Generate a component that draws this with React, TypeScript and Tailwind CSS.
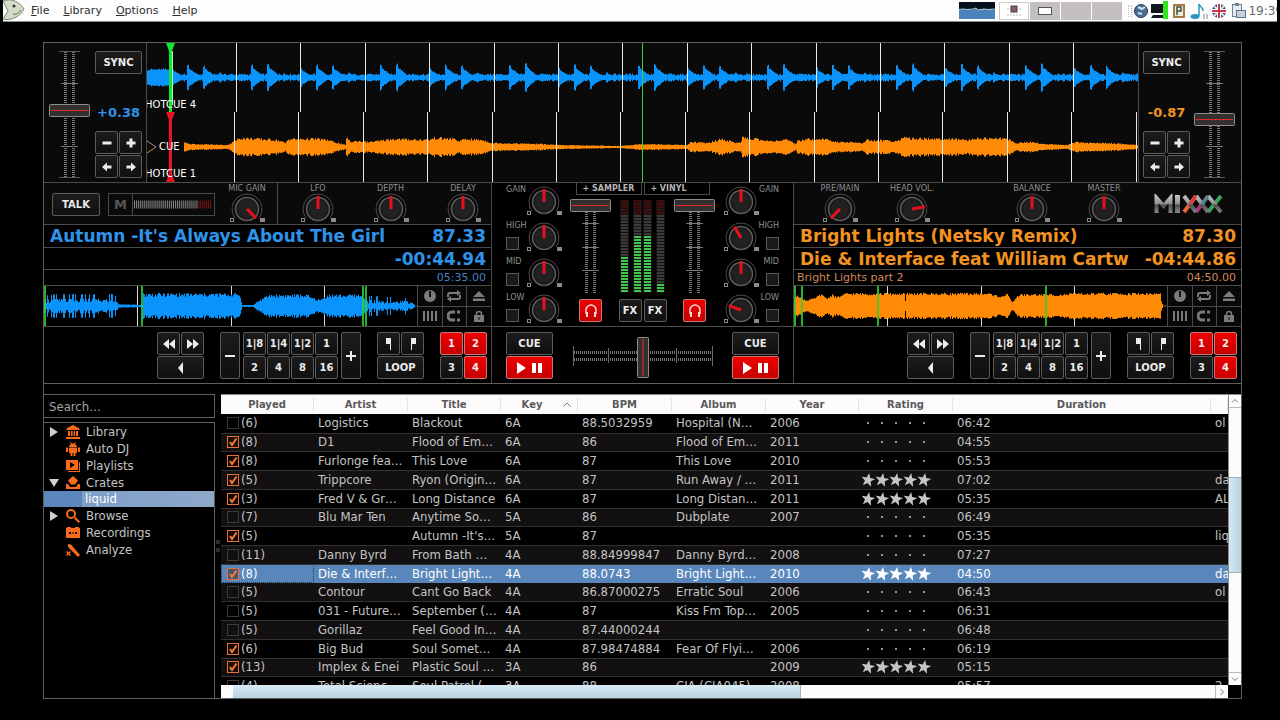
import { useState } from 'react';
import type { ReactNode } from 'react';
import clsx from 'clsx';

type Side = 'left' | 'right';

const sans = "font-['DejaVu_Sans',sans-serif]";
const condensed = "font-['DejaVu_Sans_Condensed','DejaVu_Sans',sans-serif]";

/* ---------- waveforms ---------- */

// deterministic noise, so a track always looks the same
const noise = (i: number, seed: number) => {
  const v = Math.sin(i * 12.9898 + seed * 78.233) * 43758.5453;
  return v - Math.floor(v);
};

const wavePath = (width: number, mid: number, amp: (x: number) => number) => {
  let d = '';
  for (let x = 0; x < width; x++) {
    const a = amp(x);
    if (a <= 0) continue;
    const up = Math.round((mid - a) * 10) / 10;
    const h = Math.round(a * 20) / 10;
    d += `M${x} ${up}h1v${h}h-1z`;
  }
  return d;
};

const envelope = (points: number[][], x: number) => {
  for (let i = 1; i < points.length; i++) {
    const [x0, y0] = points[i - 1];
    const [x1, y1] = points[i];
    if (x >= x0 && x <= x1) return x1 === x0 ? y1 : y0 + ((y1 - y0) * (x - x0)) / (x1 - x0);
  }
  return 0;
};

const kicks = [
  [0, 10], [16, 13], [32, 12], [48, 5], [80, 13], [96, 14], [112, 4],
];

const drumAmp = (x: number) => {
  let a = 2 + noise(x, 1) * 2;
  if (x < 24) a = 7 + noise(x, 2) * 2;
  const pos = (x - 24 + 129) % 129;
  for (const [start, height] of kicks) {
    const dist = pos - start;
    if (dist >= 0 && dist < 14) {
      const fade = dist < 2 ? 1 : 0.85 * (1 - dist / 14);
      a = Math.max(a, height * fade * (0.88 + noise(x, 3) * 0.15));
    }
  }
  return a;
};

const padPoints = [
  [36, 0], [37, 5], [42, 3], [80, 2], [88, 6], [92, 9], [110, 8], [130, 7], [138, 4], [141, 8], [170, 8],
  [180, 7], [194, 3], [198, 2], [199, 10], [203, 5], [210, 6], [220, 5], [232, 6], [245, 8], [282, 7],
  [287, 9], [308, 8], [312, 5], [316, 8], [335, 7], [345, 4], [393, 3], [410, 2], [473, 1], [495, 3],
  [540, 2], [543, 5], [560, 4], [575, 8], [585, 5], [593, 4], [595, 9], [610, 8], [618, 6], [640, 7],
  [648, 3], [650, 6], [660, 8], [680, 8], [685, 5], [700, 5], [715, 4], [720, 7], [748, 6], [755, 9],
  [796, 8], [820, 7], [835, 9], [862, 8], [868, 4], [885, 5], [895, 3], [920, 2], [928, 5], [940, 4],
  [960, 4], [991, 2],
];

const padAmp = (x: number) => envelope(padPoints, x) * (0.8 + noise(x, 4) * 0.35);

const blueOverview = [
  [0, 8], [10, 9], [25, 9], [70, 9], [75, 2], [95, 1], [98, 2], [99, 12], [195, 12], [198, 1],
  [209, 1], [212, 4], [225, 11], [262, 11], [268, 8], [276, 6], [283, 11], [316, 11], [320, 8], [367, 6], [370, 1],
];

const blueOverviewAmp = (x: number) => {
  const env = envelope(blueOverview, x);
  const spiky = x < 75 || x > 320;
  if (spiky) return env * (noise(x, 5) > 0.8 ? 1.3 : 0.35 + noise(x, 6) * 0.5);
  return env * (0.75 + noise(x, 7) * 0.35);
};

const orangeOverview = [
  [0, 8], [3, 12], [7, 8], [12, 6], [20, 8], [26, 12], [33, 8], [38, 12], [42, 9], [52, 13], [110, 13],
  [111, 5], [112, 13], [195, 13], [205, 10], [213, 12], [218, 4], [221, 8], [225, 12], [270, 12], [278, 13],
  [366, 13], [367, 5], [369, 0],
];

const orangeOverviewAmp = (x: number) => envelope(orangeOverview, x) * (0.82 + noise(x, 8) * 0.2);

const bars = Array.from({ length: 14 }, (_, i) => Math.round(90 + i * 64.4));

const Scope = () => (
  <div className="relative min-w-0 flex-1 overflow-hidden bg-[#0b0a0a]">
    <svg viewBox="0 0 991 139" preserveAspectRatio="none" className="block h-full w-full">
      <path d={wavePath(991, 34.5, drumAmp)} fill="#0a93fa" />
      <path d={wavePath(991, 104, padAmp)} fill="#ff8a06" />
      {bars.map((x) => (
        <g key={x} fill="#e8e8e8">
          <rect x={x - 1} y="0" width="1" height="69" />
          <rect x={x - 3} y="69" width="1" height="70" />
        </g>
      ))}
      <rect x="989" y="69" width="1" height="70" fill="#e8e8e8" />
      <rect x="495" y="0" width="1" height="139" fill="#3bd13b" />
      <path d="M19 0h9l-3 8v61h-3V8z" fill="#12e52e" />
      <rect x="25" y="8" width="1" height="54" fill="#b9f7bd" />
      <path d="M19 69h9l-3 8v54l3 8h-9l3-8V77z" fill="#e81224" />
      <path d="M0 98l9 6-9 6" fill="none" stroke="#c98a5c" />
    </svg>
    <div className={clsx(sans, 'pointer-events-none absolute inset-0 text-[10px] leading-3 text-white')}>
      <span className="absolute top-14 -left-0.5">HOTCUE 4</span>
      <span className="absolute top-[98px] left-3">CUE</span>
      <span className="absolute top-[125px] -left-0.5">HOTCUE 1</span>
    </div>
  </div>
);

const Overview = ({ side }: { side: Side }) => {
  const left = side === 'left';
  const cues = left ? [0, 97, 318, 321] : [0, 7, 83, 251];
  const minutes = [93, 187, 280];
  return (
    <svg viewBox="0 0 373 40" preserveAspectRatio="none" className="block h-10 min-w-0 flex-1">
      <rect y="19.5" width="373" height="1" fill={left ? '#35608f' : '#80603a'} />
      {minutes.map((x) => <rect key={x} x={x} width="1" height="40" fill="#d8d8d8" />)}
      <path
        d={left ? wavePath(373, 20, blueOverviewAmp) : wavePath(373, 20, orangeOverviewAmp)}
        fill={left ? '#0a93fa' : '#ff8a06'}
      />
      {cues.map((x) => <rect key={x} x={x} width="2" height="40" fill="#2fd03a" opacity="0.85" />)}
    </svg>
  );
};

/* ---------- basic controls ---------- */

const SkinButton = ({ children, label, red, className }: {
  children: ReactNode; label?: string; red?: boolean; className?: string;
}) => (
  <button
    type="button"
    aria-label={label}
    className={clsx(
      sans,
      'flex items-center justify-center rounded-[2px] border bg-linear-to-b text-[10px] leading-3 font-bold text-[#ececec]',
      red ? 'border-[#c77a7a] from-[#f00000] to-[#c40000]' : 'border-[#5b5b5b] from-[#1d1b1b] to-[#101010] hover:to-[#2b2b2b]',
      className ?? 'size-[23px]',
    )}
  >
    {children}
  </button>
);

const Icon = ({ d, className = 'size-3' }: { d: string; className?: string }) => (
  <svg viewBox="0 0 12 12" className={className} fill="currentColor"><path d={d} /></svg>
);

const icons = {
  minus: 'M1.500 4.500h9v3h-9z',
  plus: 'M4.500 1.500h3v3h3v3h-3v3h-3v-3h-3v-3h3z',
  thinMinus: 'M1 5h10v2H1z',
  thinPlus: 'M5 1h2v4h4v2H7v4H5V7H1V5h4z',
  arrowLeft: 'M1 6l5-4.500v3h4.500v3H6v3z',
  arrowRight: 'M11 6L6 1.500v3H1.500v3H6v3z',
  rewind: 'M0 6l6-5v10zM6 6l6-5v10z',
  forward: 'M12 6L6 1v10zM6 6L0 1v10z',
  reverse: 'M3 6l5-6v12z',
  flagIn: 'M3 0h5v12H7V6H3z',
  flagOut: 'M9 0H4v12h1V6h4z',
};

const Knob = ({ label, angle = 0 }: { label: string; angle?: number }) => (
  <div className="grid shrink-0 *:col-start-1 *:row-start-1">
    <svg viewBox="0 0 36 30" className="h-[30px] w-9" fill="none">
      <path d="M6 25a15 15 0 1 1 24 0" stroke="#4c4c4c" />
      <circle cx="18" cy="16" r="11.500" fill="#1c1b1b" stroke="#5c5c5c" strokeWidth="1.500" />
      <circle cx="18" cy="16" r="9" fill="#222121" />
      <path d="M18 16V3" stroke="#e8101c" strokeWidth="3" transform={`rotate(${angle} 18 16)`} />
      <rect x="1.500" y="25.500" width="3" height="3" stroke="#8a8a8a" />
      <rect x="31" y="25" width="5" height="4" fill="#8a8a8a" />
    </svg>
    <input type="range" aria-label={label} className="h-[30px] w-9 opacity-0" />
  </div>
);

const LabelledKnob = ({ label, angle }: { label: string; angle?: number }) => (
  <label className="flex w-12 flex-col items-center pt-0.5">
    <span className={clsx(sans, 'text-[8px] leading-2 whitespace-nowrap text-[#8f8f8f]')}>{label}</span>
    <Knob label={label} angle={angle} />
  </label>
);

const Ruler = ({ length }: { length: number }) => (
  <g stroke="#777" strokeWidth="3">
    <path d={`M16.500 1V${length}M24.500 1V${length}`} strokeDasharray="1 1" />
  </g>
);

const Fader = ({ label, length, at, ends }: { label: string; length: number; at: number; ends?: boolean }) => (
  <div className="grid *:col-start-1 *:row-start-1">
    <svg width="41" height={length} fill="none">
      <Ruler length={length} />
      {ends && <path d={`M10 .5h21M10 ${length - 0.5}h21`} stroke="#5a5a5a" />}
      {[0.25, 0.5, 0.75].map((t) => (
        (!ends || t !== 0.5) && <path key={t} d={`M12 ${Math.round(length * t) + 0.5}h17`} stroke="#777" />
      ))}
      <rect x=".5" y={at + 0.5} width="40" height="12" rx="1" fill="#343030" stroke="#8c8c8c" />
      <path d={`M2 ${at + 6.5}h37`} stroke="#e02a2a" />
    </svg>
    <input type="range" aria-label={label} className="h-full w-[41px] opacity-0" />
  </div>
);

const VuMeter = ({ level }: { level: number }) => (
  <svg width="9" height="93">
    <rect width="9" height="93" fill="#141414" />
    {Array.from({ length: 31 }, (_, i) => {
      const y = i * 3;
      let fill = '#3c3a3a';
      if (i < 5) fill = '#420c0c';
      if (y >= 93 - level) fill = '#3fc84a';
      return <rect key={i} x="1" y={y} width="7" height="2" fill={fill} />;
    })}
  </svg>
);

/* ---------- top row ---------- */

const RatePanel = ({ side, rate }: { side: Side; rate: string }) => (
  <div
    className={clsx(
      'flex w-[103px] shrink-0 justify-between border-[#4a4a4a] bg-[#0b0a0a] pt-2 pb-1',
      side === 'left' ? 'border-r pr-1 pl-[5px]' : 'flex-row-reverse border-l pr-1.5 pl-1',
    )}
  >
    <Fader label={`${side} rate`} length={127} at={side === 'left' ? 53 : 62} ends />
    <div className="flex w-[47px] flex-col items-center">
      <SkinButton className="h-[23px] w-full">SYNC</SkinButton>
      <span
        className={clsx(sans, 'mt-auto mb-2.5 text-[13px] leading-4 font-bold', side === 'left' ? 'text-[#2f93ea]' : 'text-[#f29222]')}
      >
        {rate}
      </span>
      <div className="grid grid-cols-2 gap-px">
        <SkinButton label="Rate down"><Icon d={icons.minus} /></SkinButton>
        <SkinButton label="Rate up"><Icon d={icons.plus} /></SkinButton>
        <SkinButton label="Nudge back"><Icon d={icons.arrowLeft} /></SkinButton>
        <SkinButton label="Nudge forward"><Icon d={icons.arrowRight} /></SkinButton>
      </div>
    </div>
  </div>
);

/* ---------- decks ---------- */

const MicRow = () => (
  <div className="flex h-[42px] border-b border-[#4a4a4a] bg-[#0b0a0a]">
    <div className="flex w-[234px] shrink-0 items-start border-r border-[#4a4a4a] pl-2">
      <SkinButton className="mt-2.5 h-[23px] w-12">TALK</SkinButton>
      <div className="mt-2.5 ml-2 flex h-[23px] w-[107px] border border-[#4a4a4a]">
        <span className={clsx(sans, 'flex w-6 items-center justify-center border-r border-[#4a4a4a] text-[13px] font-bold text-[#555]')}>M</span>
        <svg viewBox="0 0 82 9" className="m-auto h-[9px] w-[80px]">
          <path d="M0 4.500h66" stroke="#8a8a8a" strokeWidth="8" strokeDasharray="1 1" />
          <path d="M66 4.500h14" stroke="#7c1414" strokeWidth="8" strokeDasharray="1 1" />
        </svg>
      </div>
      <div className="ml-2"><LabelledKnob label="MIC GAIN" angle={135} /></div>
    </div>
    <div className="flex flex-1 justify-between pr-1 pl-4">
      <LabelledKnob label="LFO" />
      <LabelledKnob label="DEPTH" />
      <LabelledKnob label="DELAY" />
    </div>
  </div>
);

const Logo = () => (
  <svg viewBox="0 0 72 20" className="mt-[11px] mr-4 ml-auto h-5 w-[72px]" role="img" aria-label="Mixxx">
    <defs>
      <linearGradient id="steel" gradientUnits="userSpaceOnUse" x1="0" y1="1" x2="0" y2="19">
        <stop offset="0" stopColor="#c9c9c9" />
        <stop offset="0.5" stopColor="#8d8d8d" />
        <stop offset="0.55" stopColor="#4c4c4c" />
        <stop offset="1" stopColor="#8a8a8a" />
      </linearGradient>
    </defs>
    <path d="M3.500 19V4l7 8 7-8v15" fill="none" stroke="url(#steel)" strokeWidth="4" />
    <path d="M22 1h5v18h-5z" fill="url(#steel)" />
    <g fill="none" strokeWidth="4">
      <path d="M31 18L43 2" stroke="#e0643c" />
      <path d="M43 18L55 2" stroke="#a8357c" />
      <path d="M55 18L68 2" stroke="#3aa45e" />
      <path d="M31 2l12 16" stroke="url(#steel)" />
      <path d="M43 2l12 16" stroke="url(#steel)" />
      <path d="M55 2l13 16" stroke="url(#steel)" />
    </g>
    <path d="M37 10l6-8" stroke="#d83a3a" strokeWidth="3" />
    <path d="M49 10l6-8" stroke="#3f8f8a" strokeWidth="3" />
  </svg>
);

const MasterRow = () => (
  <div className="flex h-[42px] gap-6 border-b border-[#4a4a4a] bg-[#0b0a0a] pl-[22px]">
    <LabelledKnob label="PRE/MAIN" angle={-135} />
    <LabelledKnob label="HEAD VOL." angle={80} />
    <div className="w-6" />
    <LabelledKnob label="BALANCE" />
    <LabelledKnob label="MASTER" />
    <Logo />
  </div>
);

const DeckToggles = () => (
  <div className="grid h-10 w-[74px] shrink-0 grid-cols-3 grid-rows-2 gap-px border-l border-[#4a4a4a] bg-[#4a4a4a] text-[#7b7b7b] *:flex *:items-center *:justify-center *:bg-[#090808]">
    <button type="button" aria-label="Quantize">
      <svg viewBox="0 0 14 14" className="size-3.5">
        <circle cx="7" cy="7" r="6" fill="currentColor" /><path d="M6 2h2v6H6z" fill="#111" />
      </svg>
    </button>
    <button type="button" aria-label="Repeat">
      <svg viewBox="0 0 16 12" className="h-3 w-4" fill="none" stroke="currentColor" strokeWidth="2">
        <path d="M2 7V5q0-2 2-2h8M14 5v2q0 2-2 2H5" /><path d="M11 0v6l4-3zM5 6v6L1 9z" fill="currentColor" stroke="none" />
      </svg>
    </button>
    <button type="button" aria-label="Eject"><Icon d="M6 1l6 6H0zM0 8.500h12V11H0z" /></button>
    <button type="button" aria-label="Beat grid">
      <svg viewBox="0 0 14 12" className="h-3 w-3.5" stroke="currentColor" strokeWidth="2">
        <path d="M1 1v10M5 1v10M9 1v10M13 1v10" />
      </svg>
    </button>
    <button type="button" aria-label="Key lock">
      <svg viewBox="0 0 14 12" className="h-3 w-3.5" fill="none" stroke="currentColor" strokeWidth="3">
        <path d="M8 2H5a4 4 0 0 0 0 8h3" /><path d="M10 2h3M10 10h3" />
      </svg>
    </button>
    <button type="button" aria-label="Lock">
      <svg viewBox="0 0 12 12" className="size-3">
        <path d="M3.500 6V4a2.500 2.500 0 0 1 5 0v2" fill="none" stroke="currentColor" strokeWidth="1.500" />
        <path d="M1 5h10v7H1z" fill="currentColor" /><path d="M5.500 7h1v3h-1z" fill="#111" />
      </svg>
    </button>
  </div>
);

const beats = ['1|8', '1|4', '1|2', '1', '2', '4', '8', '16'];

const Transport = () => {
  const [hotcues, setHotcues] = useState([true, true, false, true]);
  return (
    <div className="flex h-14 items-start justify-end pt-[5px] pr-1">
      <div className="grid grid-cols-2 gap-px">
        <SkinButton label="Rewind"><Icon d={icons.rewind} /></SkinButton>
        <SkinButton label="Fast forward"><Icon d={icons.forward} /></SkinButton>
        <SkinButton label="Reverse" className="col-span-2 h-[23px]"><Icon d={icons.reverse} /></SkinButton>
      </div>
      <div className="ml-4 flex gap-[3px]">
        <SkinButton label="Shorter loop" className="h-[47px] w-5"><Icon d={icons.thinMinus} /></SkinButton>
        <div className="grid grid-cols-4 gap-px">
          {beats.map((beat) => <SkinButton key={beat}>{beat}</SkinButton>)}
        </div>
        <SkinButton label="Longer loop" className="h-[47px] w-5"><Icon d={icons.thinPlus} /></SkinButton>
      </div>
      <div className="ml-4 grid grid-cols-2 gap-px">
        <SkinButton label="Loop in"><Icon d={icons.flagIn} /></SkinButton>
        <SkinButton label="Loop out"><Icon d={icons.flagOut} /></SkinButton>
        <SkinButton className="col-span-2 h-[23px]">LOOP</SkinButton>
      </div>
      <div
        className="ml-4 grid grid-cols-2 gap-px"
        onClick={(e) => {
          const n = Number((e.target as HTMLElement).textContent) - 1;
          if (n >= 0 && n < 4) setHotcues(hotcues.map((on, i) => (i === n ? !on : on)));
        }}
      >
        {hotcues.map((on, i) => <SkinButton key={i} red={on}>{i + 1}</SkinButton>)}
      </div>
    </div>
  );
};

const Deck = ({ side, title, artist, album, bpm, remaining, total }: {
  side: Side; title: string; artist: string; album: string; bpm: string; remaining: string; total: string;
}) => {
  const big = 'flex items-center justify-between gap-4 border-b border-[#4a4a4a] pr-[5px] pl-1.5 text-[17px] leading-5 font-bold';
  return (
    <section className={clsx(sans, 'min-w-0', side === 'left' ? 'text-[#2f93ea]' : 'text-[#f29222]')}>
      {side === 'left' ? <MicRow /> : <MasterRow />}
      <div className={clsx(big, 'h-[23px]')}>
        <span className="overflow-hidden whitespace-nowrap">{title}</span>
        <span>{bpm}</span>
      </div>
      <div className={clsx(big, 'h-[22px]')}>
        <span className="overflow-hidden whitespace-nowrap">{artist}</span>
        <span>{remaining}</span>
      </div>
      <div
        className={clsx(
          'flex h-4 items-center justify-between border-b border-[#4a4a4a] pr-[5px] pl-[3px] text-[11px] leading-3',
          side === 'left' ? 'text-[#4a80c4]' : 'text-[#d08a5c]',
        )}
      >
        <span>{album}</span>
        <span>{total}</span>
      </div>
      <div className="flex border-b border-[#4a4a4a]">
        <Overview side={side} />
        <DeckToggles />
      </div>
      <Transport />
    </section>
  );
};

/* ---------- mixer ---------- */

const EqColumn = ({ side, angles }: { side: Side; angles: number[] }) => (
  <div>
    {['GAIN', 'HIGH', 'MID', 'LOW'].map((band, i) => (
      <div key={band} className={clsx('flex h-9', side === 'right' && 'flex-row-reverse')}>
        <label
          className={clsx(sans, 'flex w-5 flex-col gap-[7px] pt-[3px] text-[8px] leading-2 text-[#8f8f8f]', side === 'right' && 'items-end')}
        >
          {band}
          {i > 0 && (
            <input
              type="checkbox"
              className="size-[13px] shrink-0 appearance-none border border-[#5b5b5b] bg-[#1a1919] checked:bg-[#c40000]"
            />
          )}
        </label>
        <div className="pt-[3px]"><Knob label={`${side} ${band}`} angle={angles[i]} /></div>
      </div>
    ))}
  </div>
);

const Headphones = () => (
  <SkinButton red label="Headphones">
    <svg viewBox="0 0 16 16" className="size-4" fill="none" stroke="#f4dada" strokeWidth="1.500">
      <path d="M3 11V7a5 5 0 0 1 10 0v4" /><path d="M4 9v5M12 9v5" strokeWidth="2" />
    </svg>
  </SkinButton>
);

const ChannelStrip = ({ side }: { side: Side }) => (
  <div className="flex w-[52px] flex-col items-center justify-between">
    <Fader label={`${side} volume`} length={95} at={0} />
    <Headphones />
  </div>
);

const CueStack = () => (
  <div className="grid w-[47px] gap-px">
    <SkinButton className="h-[23px]">CUE</SkinButton>
    <SkinButton red label="Play" className="h-[23px]">
      <svg viewBox="0 0 26 12" className="h-3 w-[26px]" fill="#fff">
        <path d="M0 0l9 6-9 6zM15 1h4v10h-4zM21 1h4v10h-4z" />
      </svg>
    </SkinButton>
  </div>
);

const Mixer = () => (
  <section className="border-x border-[#4a4a4a]">
    <div className="flex h-36 justify-between border-b border-[#4a4a4a] px-3.5">
      <EqColumn side="left" angles={[0, 0, 0, 0]} />
      <div className="flex flex-col items-center">
        <div className={clsx(sans, 'flex gap-0.5 text-[8px] leading-2 font-bold text-[#b4b4b4]')}>
          <button type="button" className="h-3 w-[66px] border border-t-0 border-[#4a4a4a]">+ SAMPLER</button>
          <button type="button" className="h-3 w-[66px] border border-t-0 border-[#4a4a4a] pr-4">+ VINYL</button>
        </div>
        <div className="mt-1 mb-1 flex flex-1">
          <ChannelStrip side="left" />
          <div className="flex w-[52px] flex-col items-center justify-between pt-px">
            <div className="flex">
              <VuMeter level={36} />
              <div className="ml-1 flex gap-px"><VuMeter level={57} /><VuMeter level={57} /></div>
              <div className="ml-1"><VuMeter level={10} /></div>
            </div>
            <div className="flex gap-0.5">
              <SkinButton>FX</SkinButton>
              <SkinButton>FX</SkinButton>
            </div>
          </div>
          <ChannelStrip side="right" />
        </div>
      </div>
      <EqColumn side="right" angles={[0, -30, 0, -70]} />
    </div>
    <div className="flex h-14 items-start justify-between px-3.5 pt-[5px]">
      <CueStack />
      <div className="grid *:col-start-1 *:row-start-1">
        <svg width="140" height="47" fill="none">
          <path d="M1 20.500h138M1 27.500h138" stroke="#777" strokeWidth="3" strokeDasharray="1 1" />
          <path d="M.5 14v20M139.500 14v20M35.500 16v15M103.500 16v15" stroke="#6a6a6a" />
          <rect x="64.500" y="5.500" width="11" height="40" rx="1" fill="#343030" stroke="#8c8c8c" />
          <path d="M70 7v37" stroke="#e02a2a" />
        </svg>
        <input type="range" aria-label="Crossfader" className="w-full opacity-0" />
      </div>
      <CueStack />
    </div>
  </section>
);

/* ---------- library ---------- */

const treeIcons: Record<string, ReactNode> = {
  Library: <path d="M7 0l6.500 3.500V5H.5V3.500zM2 6h2v5H2zM5 6h1.500v5H5zM7.500 6H9v5H7.500zM10 6h2v5h-2zM0 12h14v2H0z" />,
  'Auto DJ': (
    <path d="M3 5a4 4 0 0 1 2-3L4 .5 4.500 0 6 1.500h2L9.500 0l.5.500L9 2a4 4 0 0 1 2 3zM3 5.500h8V11H9.500v3h-2v-3h-1v3h-2v-3H3zM0 5.500h2V10H0zM12 5.500h2V10h-2z" />
  ),
  Playlists: <path fillRule="evenodd" d="M0 1h12v10H0zM4 3v6l5-3zM13 3h1v10H2v-1h11z" />,
  Crates: <path d="M7 0l5 4.500-3 4H5l-3-4zM0 8h2l2 3h6l2-3h2v5H0z" />,
  Browse: (
    <path fillRule="evenodd" d="M5 0a5 5 0 1 1 0 10A5 5 0 0 1 5 0zm0 2a3 3 0 1 0 0 6 3 3 0 0 0 0-6zM8 9.500L9.500 8l4.500 4.500-1.500 1.500z" />
  ),
  Recordings: (
    <path fillRule="evenodd" d="M1 1h4v1h4V1h4v1h1v10H0V2h1zM3 6v2h2V6zM6.500 6v2h1V6zM9 6v2h2V6z" />
  ),
  Analyze: <path d="M2 1l3 .5 9 10.500-2 2L2 4zM0 9l1-1 1.500 1.500L4 8l1 1-1.500 1.500L5 12l-1 1-1.500-1.500L1 13l-1-1 1.500-1.500z" />,
};

const tree: { name: string; arrow?: 'right' | 'down'; child?: string }[] = [
  { name: 'Library', arrow: 'right' },
  { name: 'Auto DJ' },
  { name: 'Playlists' },
  { name: 'Crates', arrow: 'down', child: 'liquid' },
  { name: 'Browse', arrow: 'right' },
  { name: 'Recordings' },
  { name: 'Analyze' },
];

const Sidebar = () => (
  <aside className={clsx(condensed, 'flex w-[171px] shrink-0 flex-col gap-1 text-[13px] leading-4 text-[#c4c4c4]')}>
    <input
      type="text"
      aria-label="Search"
      placeholder="Search…"
      className="h-6 border border-l-0 border-[#5f5f5f] bg-black px-[5px] placeholder:text-[#a4a4a4] focus:outline-none"
    />
    <ul className="flex-1 border-t border-r border-[#5f5f5f]">
      {tree.map((item) => (
        <li key={item.name}>
          <div className="flex h-[17px] items-center">
            <span className="w-[22px] pl-1.5">
              {item.arrow && (
                <svg viewBox="0 0 8 10" className={clsx('h-2.5 w-2', item.arrow === 'down' && 'rotate-90')} fill="#d0d0d0">
                  <path d="M0 0l8 5-8 5z" />
                </svg>
              )}
            </span>
            <svg viewBox="0 0 14 14" className="mr-1.5 size-3.5" fill="#f96a1b">{treeIcons[item.name]}</svg>
            {item.name}
          </div>
          {item.child && (
            <div className="flex h-4 bg-[#5b87bd]">
              <div className="ml-[38px] flex-1 bg-linear-to-r from-[#7f9fc8] to-[#8ea8c9] pl-[3px] text-white">{item.child}</div>
            </div>
          )}
        </li>
      ))}
    </ul>
  </aside>
);

// checked, played, artist, title, key, bpm, album, year, rated, duration, comment
type Track = [boolean, number, string, string, string, string, string, string, boolean, string, string];

const tracks: Track[] = [
  [false, 6, 'Logistics', 'Blackout', '6A', '88.5032959', 'Hospital (N…', '2006', false, '06:42', 'ol'],
  [true, 8, 'D1', 'Flood of Em…', '6A', '86', 'Flood of Em…', '2011', false, '04:55', ''],
  [true, 8, 'Furlonge fea…', 'This Love', '6A', '87', 'This Love', '2010', false, '05:53', ''],
  [true, 5, 'Trippcore', 'Ryon (Origin…', '6A', '87', 'Run Away / …', '2011', true, '07:02', 'da'],
  [true, 3, 'Fred V & Gr…', 'Long Distance', '6A', '87', 'Long Distan…', '2011', true, '05:35', 'AL'],
  [false, 7, 'Blu Mar Ten', 'Anytime So…', '5A', '86', 'Dubplate', '2007', false, '06:49', ''],
  [true, 5, '', "Autumn -It's…", '5A', '87', '', '', false, '05:35', 'liq'],
  [false, 11, 'Danny Byrd', 'From Bath …', '4A', '88.84999847', 'Danny Byrd…', '2008', false, '07:27', ''],
  [true, 8, 'Die & Interf…', 'Bright Light…', '4A', '88.0743', 'Bright Light…', '2010', true, '04:50', 'da'],
  [false, 5, 'Contour', 'Cant Go Back', '4A', '86.87000275', 'Erratic Soul', '2006', false, '06:43', 'ol'],
  [false, 5, '031 - Future…', 'September (…', '4A', '87', 'Kiss Fm Top…', '2005', false, '06:31', ''],
  [false, 5, 'Gorillaz', 'Feel Good In…', '4A', '87.44000244', '', '', false, '06:48', ''],
  [true, 6, 'Big Bud', 'Soul Somet…', '4A', '87.98474884', 'Fear Of Flyi…', '2006', false, '06:19', ''],
  [true, 13, 'Implex & Enei', 'Plastic Soul …', '3A', '86', '', '2009', true, '05:15', ''],
  [false, 4, 'Total Scienc…', 'Soul Patrol (…', '3A', '88', 'CIA (CIA045)', '2008', false, '05:57', '2'],
];

const Rating = ({ full }: { full: boolean }) => (
  <svg width="70" height="14" fill="currentColor" className="-ml-px">
    {[0, 1, 2, 3, 4].map((i) => (full ? (
      <path
        key={i}
        transform={`translate(${i * 14 + 6} 7) rotate(10)`}
        d="M0-7l1.800 4.700L7-2.200 2.900 1 4.200 6 0 3.100-4.200 6-2.900 1-7-2.200l5.200-.1z"
      />
    ) : (
      <circle key={i} cx={i * 14 + 6} cy="7" r="1" />
    )))}
  </svg>
);

const PlayedBox = ({ checked, count }: { checked: boolean; count: number }) => {
  const [on, setOn] = useState(checked);
  return (
    <label className="flex items-center gap-0.5">
      <span className="grid *:col-start-1 *:row-start-1">
        <input
          type="checkbox"
          checked={on}
          onChange={() => setOn(!on)}
          className="size-3 appearance-none border border-[#3c3a3a] checked:border-[#e8703a] checked:bg-[#2a0f06]/40"
        />
        {on && (
          <svg viewBox="0 0 12 12" className="pointer-events-none size-3" fill="none" stroke="#fb7a30" strokeWidth="2">
            <path d="M3 6l2 3 4.500-6.500" />
          </svg>
        )}
      </span>
      ({count})
    </label>
  );
};

const columns = ['Played', 'Artist', 'Title', 'Key', 'BPM', 'Album', 'Year', 'Rating', 'Duration', ''];

const TrackTable = () => (
  <table className={clsx(condensed, 'w-full table-fixed border-collapse text-[13px] leading-4 text-[#c4c4c4]')}>
    <colgroup>
      <col className="w-[93px]" />
      <col className="w-[94px]" />
      <col className="w-[93px]" />
      <col className="w-[77px]" />
      <col className="w-[94px]" />
      <col className="w-[94px]" />
      <col className="w-[93px]" />
      <col className="w-[94px]" />
      <col />
      <col className="w-[17px]" />
    </colgroup>
    <thead>
      <tr className={clsx(sans, 'h-[19px] bg-[#fdfbfc] text-[10px] leading-3 text-[#5a5a5a]')}>
        {columns.map((name) => (
          <th key={name} scope="col" className="p-0 font-bold">
            <div className="flex h-3.5 items-center border-r border-[#e6e4e5]">
              <span className="flex-1">{name}</span>
              {name === 'Key' && (
                <svg viewBox="0 0 8 5" className="mr-1.5 h-[5px] w-2" fill="none" stroke="#777"><path d="M.5 4.500L4 1l3.500 3.500" /></svg>
              )}
            </div>
          </th>
        ))}
      </tr>
    </thead>
    <tbody>
      {tracks.map(([checked, played, artist, title, key, bpm, album, year, rated, duration, comment], i) => {
        const selected = i === 8;
        return (
          <tr
            key={i}
            className={clsx(
              'h-[19px] nth-[4n+2]:h-[18px] *:overflow-hidden *:py-0 *:pr-0 *:pl-1 *:whitespace-nowrap',
              selected ? 'bg-[#5a87bb] text-white' : 'border-b border-[#333132] odd:bg-black even:bg-[#121011]',
            )}
          >
            <td className={clsx(selected && 'outline-1 -outline-offset-1 outline-[#27364a] outline-dotted')}>
              <div className="pl-0.5"><PlayedBox checked={checked} count={played} /></div>
            </td>
            <td>{artist}</td>
            <td>{title}</td>
            <td>{key}</td>
            <td>{bpm}</td>
            <td>{album}</td>
            <td>{year}</td>
            <td><Rating full={rated} /></td>
            <td>{duration}</td>
            <td>{comment}</td>
          </tr>
        );
      })}
    </tbody>
  </table>
);

const ScrollArrow = ({ label, d, className }: { label: string; d: string; className: string }) => (
  <button type="button" aria-label={label} className={clsx('flex items-center justify-center border-[#b9b9b9]', className)}>
    <svg viewBox="0 0 8 8" className="size-2" fill="none" stroke="#777"><path d={d} /></svg>
  </button>
);

const Library = () => (
  <div className="flex min-h-0 flex-1 pt-2.5">
    <Sidebar />
    <div className="flex w-1.5 flex-col items-center justify-center gap-1 *:size-1 *:bg-[#2c2c2c]">
      <i />
      <i />
    </div>
    <div className="grid min-w-0 flex-1 grid-cols-[minmax(0,1fr)_13px] grid-rows-[minmax(0,1fr)_13px] border-t border-[#8a8a8a]">
      <div className="overflow-hidden"><TrackTable /></div>
      <div className="flex flex-col border-l border-[#8a8a8a] bg-[#fdfbfc]">
        <ScrollArrow label="Scroll up" d="M1 5.500l3-3 3 3" className="h-[13px] border-b" />
        <div className="h-[69px]" />
        <div className="h-24 border-y border-[#9fb4c0] bg-linear-to-r from-[#d6e8f2] to-[#b9d3e2]" />
        <ScrollArrow label="Scroll down" d="M1 2.500l3 3 3-3" className="mt-auto h-[13px] border-t" />
      </div>
      <div className="flex bg-[#fdfbfc]">
        <div className="w-3" />
        <div className="w-[568px] border-r border-[#9fb4c0] bg-linear-to-b from-[#d9eaf4] to-[#b9d3e2]" />
        <ScrollArrow label="Scroll right" d="M2.500 1l3 3-3 3" className="ml-auto w-[13px] border-l" />
      </div>
    </div>
  </div>
);

/* ---------- desktop bar ---------- */

const MenuBar = () => (
  <header className="mr-[3px] ml-[3px] flex h-[22px] shrink-0 items-center overflow-hidden border-b border-[#8a8a8a] bg-[#fdfdfd]">
    <svg viewBox="0 0 22 22" className="h-[22px] w-[22px]">
      <path d="M0 1C8-2 16 1 21 9 17 17 8 21 0 19l5-8z" fill="#d3dccb" stroke="#7d8a74" />
      <path d="M10 14c3 1 6-1 8-4" fill="none" stroke="#5d6a55" />
      <circle cx="11" cy="6" r="1.500" fill="#333" />
    </svg>
    <nav className={clsx(sans, 'ml-1.5 flex gap-3.5 text-[11px] leading-4 text-[#2d2d2d]')}>
      {['File', 'Library', 'Options', 'Help'].map((name) => (
        <button key={name} type="button"><u>{name[0]}</u>{name.slice(1)}</button>
      ))}
    </nav>
    <div className="ml-auto flex shrink-0 items-center">
      <svg viewBox="0 0 36 17" className="mr-1 h-[17px] w-9">
        <rect width="36" height="17" fill="#06101c" />
        <path d="M0 8l4-1 3 1 4-1 3 1 3-2 2 2 6-1 4 1 3-1 4 1v9H0z" fill="#4c83bb" />
        <path d="M0 7.500l4-.5 4 .5 6-.5 3-1 2 2 6-1 4 .5 7-.5" fill="none" stroke="#b9cde0" />
      </svg>
      <div className="flex h-[18px] gap-px *:flex *:w-[30px] *:items-center *:justify-center">
        <div className="border border-[#ccc] bg-white">
          <svg viewBox="0 0 14 12" className="h-3 w-3.5"><path d="M0 4h14M0 10h14" stroke="#bbb" strokeDasharray="2 1" /><rect x="4" y="1" width="6" height="6" fill="#8a5a5a" stroke="#444" /></svg>
        </div>
        <div className="bg-[#c4c0c0]"><span className="h-2 w-3.5 border border-[#555] bg-white" /></div>
        <div className="bg-[#c4c0c0]" />
        <div className="bg-[#c4c0c0]" />
      </div>
      <div className="mr-0.5 ml-1.5 h-3 w-1 border-x border-dotted border-[#bbb]" />
      <svg viewBox="0 0 112 20" className="h-5 w-28" fill="none">
        <circle cx="7" cy="10" r="6.500" fill="#4a6f94" stroke="#2c3c4e" />
        <path d="M4 6l4 2 3-2M4 12l4 1" stroke="#cfe0ee" strokeWidth="2" />
        <path d="M17 3h12v9H17zM19 14h10v3H17z" fill="#10161c" />
        <path d="M29 0h5v18h-5z" fill="#2ee81c" />
        <rect x="40" y="4" width="10" height="12" fill="#e9ecd9" stroke="#a87a48" strokeWidth="2" />
        <path d="M43 14V6h4v4h-4" stroke="#2f5542" strokeWidth="1.500" />
        <path d="M65 15V3c1 3 4 3 4 7" stroke="#2b93c4" strokeWidth="1.500" />
        <ellipse cx="61" cy="15.500" rx="4.500" ry="2.500" fill="#2b93c4" />
        <path d="M70 13v5M73 13v5" stroke="#888" />
        <circle cx="85" cy="10" r="7" fill="#3a4a86" />
        <path d="M80 5l10 10M90 5L80 15" stroke="#ddd" strokeWidth="2" />
        <path d="M85 3v14M78 10h14" stroke="#fff" strokeWidth="4" />
        <path d="M85 3v14M78 10h14" stroke="#c8364a" strokeWidth="2" />
        <rect x="98.500" y="3.500" width="9" height="12" fill="#e4ebf2" stroke="#6f8398" />
        <rect x="102.500" y="9.500" width="9" height="7" fill="#c4d0dc" stroke="#5c6f84" />
        <path d="M101 2h4v3h-4z" fill="#6f8398" />
      </svg>
      <time className={clsx(sans, '-mr-1.5 ml-0.5 text-[12px] leading-4 text-[#6a6a6a]')}>19:39</time>
    </div>
  </header>
);

export default function App() {
  return (
    <div className="flex h-screen flex-col overflow-hidden bg-black">
      <MenuBar />
      <main className="mt-5 mr-[38px] mb-[21px] ml-[43px] flex min-h-0 flex-1 flex-col border border-[#5f5f5f]">
        <div className="flex h-[140px] shrink-0 border-b border-[#4a4a4a]">
          <RatePanel side="left" rate="+0.38" />
          <Scope />
          <RatePanel side="right" rate="-0.87" />
        </div>
        <div className="grid shrink-0 grid-cols-[minmax(0,1fr)_303px_minmax(0,1fr)] border-b border-[#5f5f5f]">
          <Deck
            side="left"
            title="Autumn -It's Always About The Girl"
            artist=""
            album=""
            bpm="87.33"
            remaining="-00:44.94"
            total="05:35.00"
          />
          <Mixer />
          <Deck
            side="right"
            title="Bright Lights (Netsky Remix)"
            artist="Die & Interface feat William Cartw"
            album="Bright Lights part 2"
            bpm="87.30"
            remaining="-04:44.86"
            total="04:50.00"
          />
        </div>
        <Library />
      </main>
    </div>
  );
}
